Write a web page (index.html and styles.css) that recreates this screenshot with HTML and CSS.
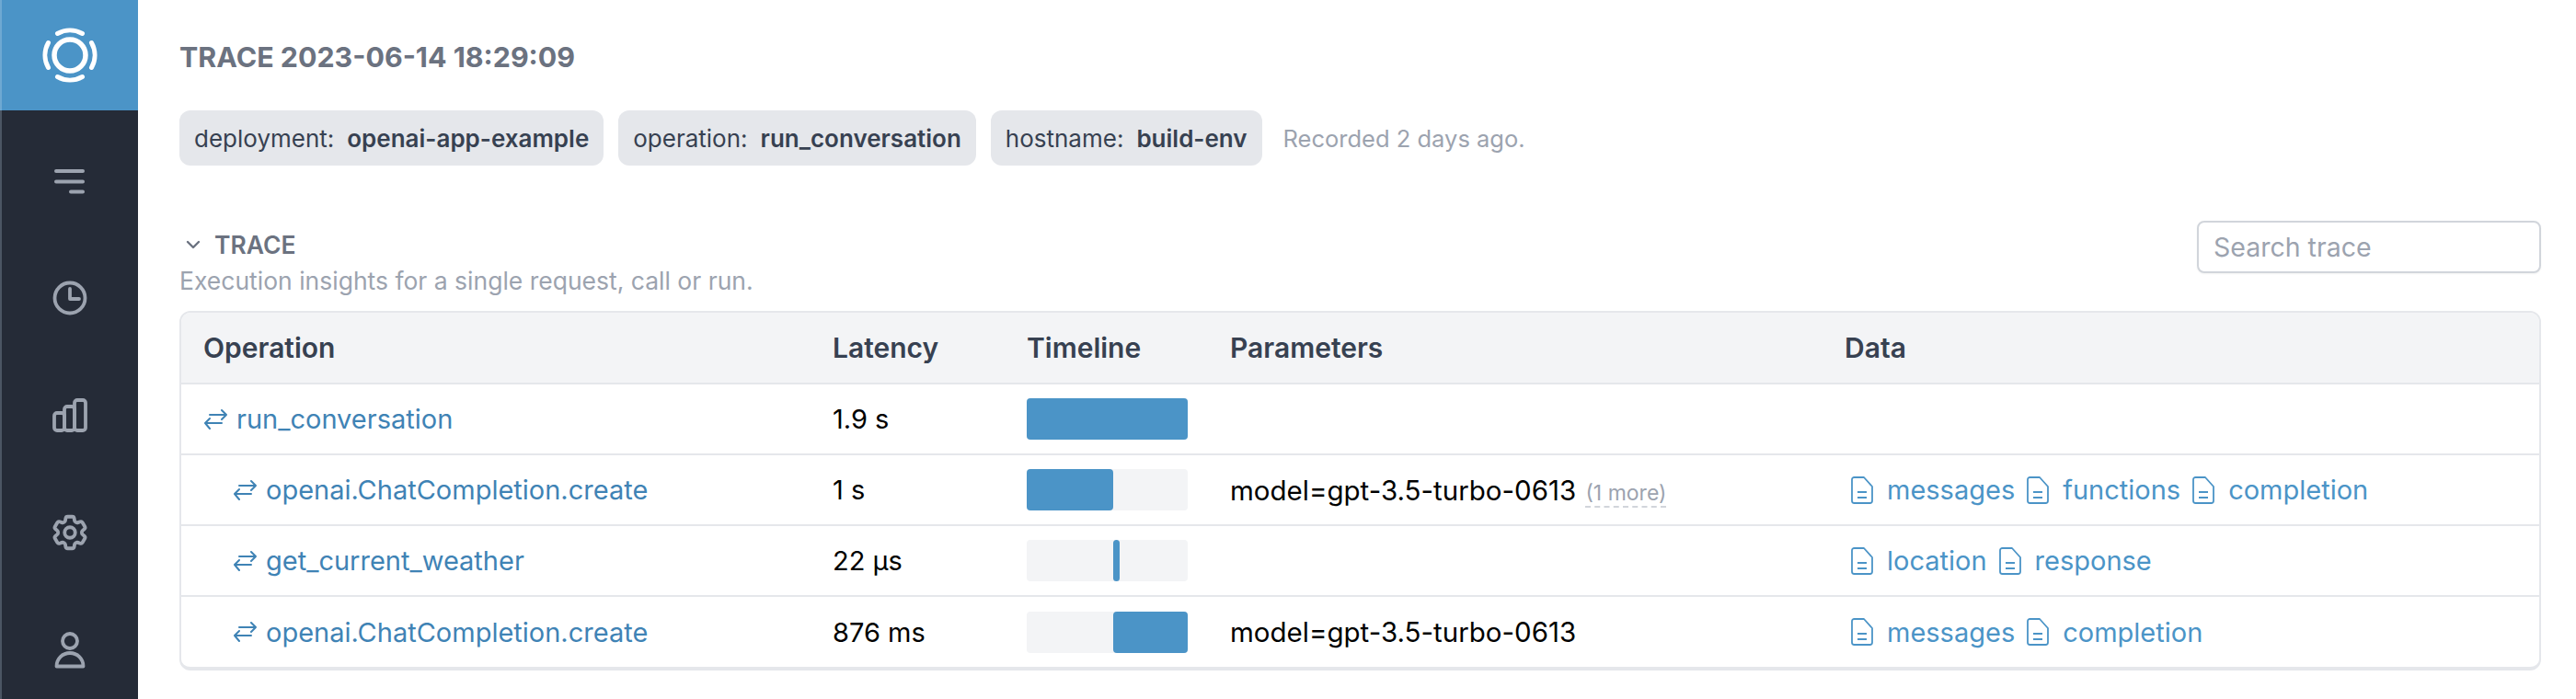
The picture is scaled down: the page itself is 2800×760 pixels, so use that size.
FILE: index.html
```html
<!DOCTYPE html>
<html lang="en">
<head>
    <meta charset="UTF-8">
    <title>Trace</title>
    <link rel="stylesheet" href="styles.css">
</head>
<body>
    <div class="app">
        <aside class="sidebar">
            <div class="logo">
                <svg width="70" height="70" viewBox="0 0 70 70" fill="none" stroke="#fff" stroke-linecap="round">
                    <circle cx="35" cy="35" r="17" stroke-width="5.5"/>
                    <path d="M21.5 11.5a27.5 27.5 0 0 1 27 0M58.5 21.5a27.5 27.5 0 0 1 0 27M48.5 58.5a27.5 27.5 0 0 1-27 0M11.5 48.5a27.5 27.5 0 0 1 0-27" stroke-width="5"/>
                </svg>
            </div>
            <nav class="nav">
                <a class="nav-item">
                    <svg width="40" height="40" viewBox="0 0 40 40" fill="none" stroke="currentColor" stroke-width="4" stroke-linecap="round">
                        <path d="M5 9h29M5 20.5h29M21 31.500h13"/>
                    </svg>
                </a>
                <a class="nav-item">
                    <svg width="40" height="40" viewBox="0 0 40 40" fill="none" stroke="currentColor" stroke-width="3.800" stroke-linecap="round" stroke-linejoin="round">
                        <circle cx="20" cy="20" r="16.500"/>
                        <path d="M20 10v11h10"/>
                    </svg>
                </a>
                <a class="nav-item">
                    <svg width="40" height="40" viewBox="0 0 40 40" fill="none" stroke="currentColor" stroke-width="3.800" stroke-linejoin="round">
                        <rect x="3" y="17" width="11" height="19" rx="3"/>
                        <rect x="14" y="10" width="11" height="26" rx="3"/>
                        <rect x="25" y="3" width="12" height="33" rx="3"/>
                    </svg>
                </a>
                <a class="nav-item">
                    <svg width="46" height="46" viewBox="0 0 24 24" fill="none" stroke="currentColor" stroke-width="2" stroke-linecap="round" stroke-linejoin="round">
                        <path d="M9.594 3.940c.09-.542.56-.94 1.110-.94h2.593c.55 0 1.020.398 1.110.94l.213 1.281c.063.374.313.686.645.870.074.04.147.083.22.127.324.196.72.257 1.075.124l1.217-.456a1.125 1.125 0 0 1 1.370.49l1.296 2.247a1.125 1.125 0 0 1-.26 1.431l-1.003.827c-.293.24-.438.613-.431.992a6.759 6.759 0 0 1 0 .255c-.007.378.138.75.43.99l1.005.828c.424.35.534.954.26 1.430l-1.298 2.247a1.125 1.125 0 0 1-1.369.491l-1.217-.456c-.355-.133-.75-.072-1.076.124a6.570 6.570 0 0 1-.22.128c-.331.183-.581.495-.644.869l-.213 1.280c-.09.543-.56.941-1.110.941h-2.594c-.55 0-1.020-.398-1.110-.94l-.213-1.281c-.062-.374-.312-.686-.644-.870a6.520 6.520 0 0 1-.22-.127c-.325-.196-.72-.257-1.076-.124l-1.217.456a1.125 1.125 0 0 1-1.369-.49l-1.297-2.247a1.125 1.125 0 0 1 .26-1.431l1.004-.827c.292-.24.437-.613.43-.992a6.932 6.932 0 0 1 0-.255c.007-.378-.138-.75-.43-.99l-1.004-.828a1.125 1.125 0 0 1-.26-1.430l1.297-2.247a1.125 1.125 0 0 1 1.370-.491l1.216.456c.356.133.751.072 1.076-.124.072-.044.146-.087.22-.128.332-.183.582-.495.644-.869l.214-1.281z"/>
                        <circle cx="12" cy="12" r="3"/>
                    </svg>
                </a>
                <a class="nav-item">
                    <svg width="40" height="40" viewBox="0 0 40 40" fill="none" stroke="currentColor" stroke-width="3.800" stroke-linejoin="round">
                        <circle cx="20" cy="10" r="8"/>
                        <path d="M5.500 37.500c0-8.500 6.500-14.500 14.500-14.500s14.500 6 14.500 14.500z"/>
                    </svg>
                </a>
            </nav>
        </aside>

        <main class="main">
            <h1 class="page-title">TRACE 2023-06-14 18:29:09</h1>

            <div class="tags">
                <span class="tag">deployment:<b>openai-app-example</b></span>
                <span class="tag">operation:<b>run_conversation</b></span>
                <span class="tag">hostname:<b>build-env</b></span>
                <span class="recorded">Recorded 2 days ago.</span>
            </div>

            <section class="section">
                <div class="section-head">
                    <div class="section-text">
                        <h2 class="section-title">
                            <svg width="18" height="12" viewBox="0 0 18 12" fill="none" stroke="#6b7280" stroke-width="2.400" stroke-linecap="round" stroke-linejoin="round">
                                <path d="M3 3l6 6 6-6"/>
                            </svg>
                            TRACE
                        </h2>
                        <p class="section-desc">Execution insights for a single request, call or run.</p>
                    </div>
                    <input class="search" type="text" placeholder="Search trace">
                </div>

                <div class="table-box">
                    <table class="trace-table">
                        <thead>
                            <tr>
                                <th class="col-op">Operation</th>
                                <th class="col-latency">Latency</th>
                                <th class="col-timeline">Timeline</th>
                                <th class="col-params">Parameters</th>
                                <th>Data</th>
                            </tr>
                        </thead>
                        <tbody>
                            <tr>
                                <td><a class="op"><svg class="swap" width="26" height="24" viewBox="0 0 26 24" fill="none" stroke="currentColor" stroke-width="2" stroke-linecap="round" stroke-linejoin="round"><path d="M7 7h18m0 0l-5-5m5 5l-5 5M20 16H2m0 0l5-5m-5 5l5 6"/></svg>run_conversation</a></td>
                                <td>1.9 s</td>
                                <td><div class="track"><div class="bar" style="margin-left:0;width:100%"></div></div></td>
                                <td></td>
                                <td></td>
                            </tr>
                            <tr>
                                <td class="child"><a class="op"><svg class="swap" width="26" height="24" viewBox="0 0 26 24" fill="none" stroke="currentColor" stroke-width="2" stroke-linecap="round" stroke-linejoin="round"><path d="M7 7h18m0 0l-5-5m5 5l-5 5M20 16H2m0 0l5-5m-5 5l5 6"/></svg>openai.ChatCompletion.create</a></td>
                                <td>1 s</td>
                                <td><div class="track"><div class="bar" style="margin-left:0;width:53.500%"></div></div></td>
                                <td class="params">model=gpt-3.5-turbo-0613 <span class="more">(1 more)</span></td>
                                <td>
                                    <div class="files">
                                        <a class="file"><svg width="24" height="30" viewBox="0 0 24 30" fill="none" stroke="currentColor" stroke-width="1.800" stroke-linejoin="round"><path d="M3.500 1h10.500l9 10v15.500a2.500 2.500 0 0 1-2.500 2.500h-17a2.500 2.500 0 0 1-2.500-2.500v-23a2.500 2.500 0 0 1 2.500-2.500z"/><path d="M7 17h10M7 23h10"/></svg>messages</a>
                                        <a class="file"><svg width="24" height="30" viewBox="0 0 24 30" fill="none" stroke="currentColor" stroke-width="1.800" stroke-linejoin="round"><path d="M3.500 1h10.500l9 10v15.500a2.500 2.500 0 0 1-2.500 2.500h-17a2.500 2.500 0 0 1-2.500-2.500v-23a2.500 2.500 0 0 1 2.500-2.500z"/><path d="M7 17h10M7 23h10"/></svg>functions</a>
                                        <a class="file"><svg width="24" height="30" viewBox="0 0 24 30" fill="none" stroke="currentColor" stroke-width="1.800" stroke-linejoin="round"><path d="M3.500 1h10.500l9 10v15.500a2.500 2.500 0 0 1-2.500 2.500h-17a2.500 2.500 0 0 1-2.500-2.500v-23a2.500 2.500 0 0 1 2.500-2.500z"/><path d="M7 17h10M7 23h10"/></svg>completion</a>
                                    </div>
                                </td>
                            </tr>
                            <tr>
                                <td class="child"><a class="op"><svg class="swap" width="26" height="24" viewBox="0 0 26 24" fill="none" stroke="currentColor" stroke-width="2" stroke-linecap="round" stroke-linejoin="round"><path d="M7 7h18m0 0l-5-5m5 5l-5 5M20 16H2m0 0l5-5m-5 5l5 6"/></svg>get_current_weather</a></td>
                                <td>22 µs</td>
                                <td><div class="track"><div class="bar" style="margin-left:53.500%;width:4%"></div></div></td>
                                <td></td>
                                <td>
                                    <div class="files">
                                        <a class="file"><svg width="24" height="30" viewBox="0 0 24 30" fill="none" stroke="currentColor" stroke-width="1.800" stroke-linejoin="round"><path d="M3.500 1h10.500l9 10v15.500a2.500 2.500 0 0 1-2.500 2.500h-17a2.500 2.500 0 0 1-2.500-2.500v-23a2.500 2.500 0 0 1 2.500-2.500z"/><path d="M7 17h10M7 23h10"/></svg>location</a>
                                        <a class="file"><svg width="24" height="30" viewBox="0 0 24 30" fill="none" stroke="currentColor" stroke-width="1.800" stroke-linejoin="round"><path d="M3.500 1h10.500l9 10v15.500a2.500 2.500 0 0 1-2.500 2.500h-17a2.500 2.500 0 0 1-2.500-2.500v-23a2.500 2.500 0 0 1 2.500-2.500z"/><path d="M7 17h10M7 23h10"/></svg>response</a>
                                    </div>
                                </td>
                            </tr>
                            <tr>
                                <td class="child"><a class="op"><svg class="swap" width="26" height="24" viewBox="0 0 26 24" fill="none" stroke="currentColor" stroke-width="2" stroke-linecap="round" stroke-linejoin="round"><path d="M7 7h18m0 0l-5-5m5 5l-5 5M20 16H2m0 0l5-5m-5 5l5 6"/></svg>openai.ChatCompletion.create</a></td>
                                <td>876 ms</td>
                                <td><div class="track"><div class="bar" style="margin-left:53.500%;width:46.500%"></div></div></td>
                                <td class="params">model=gpt-3.5-turbo-0613</td>
                                <td>
                                    <div class="files">
                                        <a class="file"><svg width="24" height="30" viewBox="0 0 24 30" fill="none" stroke="currentColor" stroke-width="1.800" stroke-linejoin="round"><path d="M3.500 1h10.500l9 10v15.500a2.500 2.500 0 0 1-2.500 2.500h-17a2.500 2.500 0 0 1-2.500-2.500v-23a2.500 2.500 0 0 1 2.500-2.500z"/><path d="M7 17h10M7 23h10"/></svg>messages</a>
                                        <a class="file"><svg width="24" height="30" viewBox="0 0 24 30" fill="none" stroke="currentColor" stroke-width="1.800" stroke-linejoin="round"><path d="M3.500 1h10.500l9 10v15.500a2.500 2.500 0 0 1-2.500 2.500h-17a2.500 2.500 0 0 1-2.500-2.500v-23a2.500 2.500 0 0 1 2.500-2.500z"/><path d="M7 17h10M7 23h10"/></svg>completion</a>
                                    </div>
                                </td>
                            </tr>
                        </tbody>
                    </table>
                </div>
            </section>
        </main>
    </div>
</body>
</html>
```

FILE: styles.css
```css
* {
    box-sizing: border-box;
}

html,
body {
    margin: 0;
    padding: 0;
    height: 760px;
    overflow: hidden;
    background-color: #fff;
    font-family: Inter, "Noto Sans", sans-serif;
}

.app {
    display: flex;
    height: 760px;
}

/* Sidebar */
.sidebar {
    flex: 0 0 150px;
    overflow: hidden;
    background-color: #252b37;
}

.logo {
    display: flex;
    align-items: center;
    justify-content: center;
    height: 120px;
    background-color: #4b94c7;
    border-left: 2px solid #6ea9d2;
}

.nav {
    height: 640px;
    padding-top: 13px;
    border-left: 2px solid #4b5563;
}

.nav-item {
    display: flex;
    align-items: center;
    justify-content: center;
    height: 127.5px;
    color: #9ca3af;
}

/* Main */
.main {
    flex: 1;
    min-width: 0;
    padding: 0 38px 0 45px;
}

.page-title {
    margin: 0;
    padding-top: 43px;
    font-size: 30.400px;
    line-height: 38px;
    font-weight: 700;
    color: #6b7280;
}

.tags {
    display: flex;
    align-items: center;
    gap: 16px;
    margin-top: 39px;
}

.tag {
    display: flex;
    align-items: center;
    height: 60px;
    padding: 0 16px;
    border-radius: 12px;
    background-color: #e5e7eb;
    font-size: 26px;
    color: #374151;
}

.tag b {
    margin-left: 14px;
    font-weight: 600;
}

.recorded {
    margin-left: 7px;
    font-size: 25.5px;
    color: #9ca3af;
}

.section {
    margin-top: 50px;
}

.section-head {
    display: flex;
    align-items: flex-start;
    justify-content: space-between;
}

.section-text {
    padding-top: 18px;
}

.section-title {
    display: flex;
    align-items: center;
    gap: 14px;
    margin: 0;
    padding-left: 6px;
    font-size: 26.500px;
    line-height: 36px;
    font-weight: 600;
    color: #6b7280;
}

.section-desc {
    margin: 3px 0 0;
    font-size: 26.500px;
    line-height: 36px;
    color: #9ca3af;
}

.search {
    width: 374px;
    height: 57px;
    margin-top: 10px;
    padding: 0 16px;
    border: 2px solid #d1d5db;
    border-radius: 8px;
    box-shadow: 0 1px 2px rgba(0, 0, 0, 0.05);
    font-family: inherit;
    font-size: 28.500px;
    color: #374151;
}

.search::placeholder {
    color: #9ca3af;
}

/* Table */
.table-box {
    margin-top: 15px;
    border: 2px solid #e5e7eb;
    border-bottom-width: 4px;
    border-radius: 12px;
    overflow: hidden;
}

.trace-table {
    width: 100%;
    table-layout: fixed;
    border-collapse: collapse;
    font-size: 29px;
    color: #000;
}

.trace-table th {
    height: 77px;
    padding: 0 24px;
    border-bottom: 2px solid #e5e7eb;
    background-color: #f3f4f6;
    text-align: left;
    font-size: 30px;
    font-weight: 600;
    color: #374151;
}

.trace-table td {
    height: 77px;
    padding: 0 24px;
    border-top: 2px solid #e5e7eb;
    white-space: nowrap;
}

.trace-table tbody tr:first-child td {
    border-top: none;
}

.col-op {
    width: 684px;
}

.col-latency {
    width: 211px;
}

.col-timeline {
    width: 221px;
}

.col-params {
    width: 668px;
}

.child {
    padding-left: 56px !important;
}

.params {
    font-size: 29.500px;
}

.op {
    display: flex;
    align-items: center;
    gap: 10px;
    color: #3f83b5;
}

.track {
    display: flex;
    width: 175px;
    height: 45px;
    border-radius: 4px;
    background-color: #f3f4f6;
}

.bar {
    border-radius: 4px;
    background-color: #4b94c7;
}

.more {
    margin-left: 2px;
    border-bottom: 2px dashed #d1d5db;
    font-size: 23px;
    color: #9ca3af;
}

.files {
    display: flex;
    gap: 13px;
    padding-left: 7px;
}

.file {
    display: flex;
    align-items: center;
    gap: 15px;
    color: #4b94c7;
}
```
